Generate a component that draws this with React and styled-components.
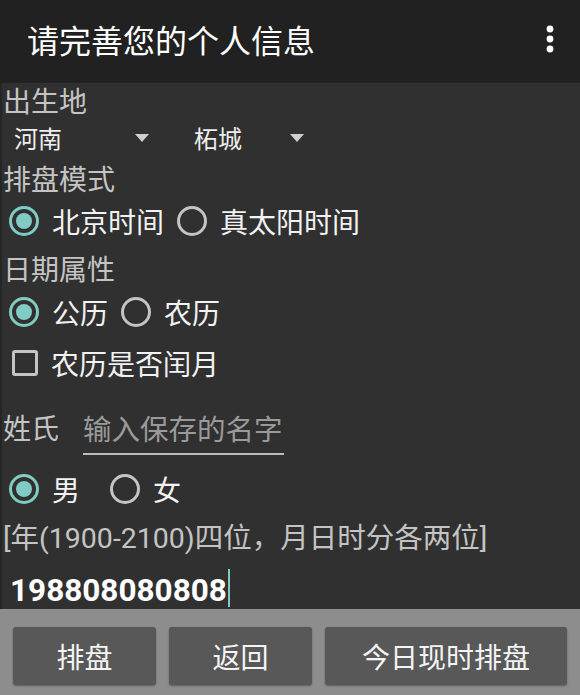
import React from 'react';
import styled, { createGlobalStyle } from 'styled-components';

const GlobalStyle = createGlobalStyle`
    html, body {
        margin: 0;
        padding: 0;
        background: #303030;
    }
    body {
        font-family: Roboto, "Noto Sans CJK SC", "Noto Sans", sans-serif;
    }
`

const Screen = styled.div`
    width: 580px;
    height: 695px;
    display: flex;
    flex-direction: column;
    background: #303030;
    overflow: hidden;
`

const Toolbar = styled.div`
    height: 83px;
    flex: none;
    display: flex;
    align-items: center;
    justify-content: space-between;
    padding: 0 24px 6px 27px;
    background: #212121;
    box-sizing: border-box;
`

const Title = styled.h1`
    margin: 0;
    font-size: 32px;
    font-weight: 400;
    color: #ffffff;
`

const Body = styled.div`
    flex: 1;
    display: flex;
    flex-direction: column;
    border-left: 2px solid #252525;
    padding-left: 1px;
`

const Row = styled.div`
    height: ${p => p.$h}px;
    flex: none;
    display: flex;
    align-items: center;
    gap: ${p => p.$gap || 13}px;
    padding-left: ${p => p.$pl || 0}px;
`

const SectionLabel = styled(Row)`
    font-size: 28px;
    color: #c4c4c4;
`

const Spinner = styled.div`
    width: ${p => p.$w}px;
    display: flex;
    align-items: center;
    justify-content: space-between;
    font-size: 24px;
    color: #eeeeee;
`

const Arrow = styled.span`
    width: 0;
    height: 0;
    border-left: 7px solid transparent;
    border-right: 7px solid transparent;
    border-top: 8px solid #cfcfcf;
    margin-top: 2px;
`

const Option = styled.label`
    display: flex;
    align-items: center;
    gap: 13px;
    font-size: 28px;
    color: #f2f2f2;
`

const Radio = styled.span`
    width: 30px;
    height: 30px;
    box-sizing: border-box;
    border-radius: 50%;
    border: 3px solid ${p => (p.$on ? '#80cbc4' : '#c4c4c4')};
    display: flex;
    align-items: center;
    justify-content: center;
    &::after {
        content: '';
        width: 16px;
        height: 16px;
        border-radius: 50%;
        background: ${p => (p.$on ? '#80cbc4' : 'transparent')};
    }
`

const Checkbox = styled.span`
    width: 26px;
    height: 26px;
    box-sizing: border-box;
    border: 3px solid #c4c4c4;
    border-radius: 3px;
    margin-left: 3px;
`

const NameInput = styled.div`
    width: 201px;
    padding-bottom: 5px;
    margin-top: 8px;
    border-bottom: 2px solid #bdbdbd;
    font-size: 28.5px;
    color: #9a9a9a;
    margin-left: 11px;
    white-space: nowrap;
`

const Hint = styled(Row)`
    font-size: 28.5px;
    color: #c4c4c4;
    white-space: nowrap;
`

const DateValue = styled(Row)`
    padding: 10px 0 0 7px;
    box-sizing: border-box;
    align-items: flex-end;
    gap: 0;
    font-size: 31.5px;
    font-weight: 700;
    color: #ffffff;
`

const Caret = styled.span`
    width: 2px;
    height: 38px;
    margin: 0 0 2px 1px;
    background: #80cbc4;
`

const ButtonBar = styled.div`
    height: 86px;
    flex: none;
    display: grid;
    grid-template-columns: 143px 143px 1fr;
    gap: 13px;
    padding: 18px 13px 10px;
    box-sizing: border-box;
    background: #8d8d8d;
`

const Button = styled.button`
    border: none;
    border-radius: 3px;
    background: #585858;
    box-shadow: 0 1px 2px rgba(0, 0, 0, 0.35);
    color: #f4f4f4;
    font-family: inherit;
    font-size: 28px;
    padding: 0;
`

const MoreIcon = () => (
    <svg width="12" height="34" viewBox="0 0 12 34">
        <circle cx="6" cy="7" r="3.4" fill="#fff" />
        <circle cx="6" cy="17" r="3.4" fill="#fff" />
        <circle cx="6" cy="27" r="3.4" fill="#fff" />
    </svg>
)

const App = () => {
    return <>
        <GlobalStyle />
        <Screen>
            <Toolbar>
                <Title>请完善您的个人信息</Title>
                <MoreIcon />
            </Toolbar>

            <Body>
                {/* birthplace */}
                <SectionLabel $h={34}>出生地</SectionLabel>
                <Row $h={40} $pl={11} $gap={45}>
                    <Spinner $w={135}>河南<Arrow /></Spinner>
                    <Spinner $w={110}>柘城<Arrow /></Spinner>
                </Row>

                {/* chart mode */}
                <SectionLabel $h={42}>排盘模式</SectionLabel>
                <Row $h={44} $pl={6}>
                    <Option><Radio $on />北京时间</Option>
                    <Option><Radio />真太阳时间</Option>
                </Row>

                {/* date type */}
                <SectionLabel $h={50}>日期属性</SectionLabel>
                <Row $h={38} $pl={6}>
                    <Option><Radio $on />公历</Option>
                    <Option><Radio />农历</Option>
                </Row>
                <Row $h={64} $pl={6}>
                    <Option><Checkbox />农历是否闰月</Option>
                </Row>

                {/* name */}
                <SectionLabel $h={64}>
                    姓氏
                    <NameInput>输入保存的名字</NameInput>
                </SectionLabel>

                <Row $h={60} $pl={6} $gap={30}>
                    <Option><Radio $on />男</Option>
                    <Option><Radio />女</Option>
                </Row>

                <Hint $h={32}>[年(1900-2100)四位，月日时分各两位]</Hint>
                <DateValue $h={58}>198808080808<Caret /></DateValue>
            </Body>

            <ButtonBar>
                <Button>排盘</Button>
                <Button>返回</Button>
                <Button>今日现时排盘</Button>
            </ButtonBar>
        </Screen>
    </>
};

export default App;
